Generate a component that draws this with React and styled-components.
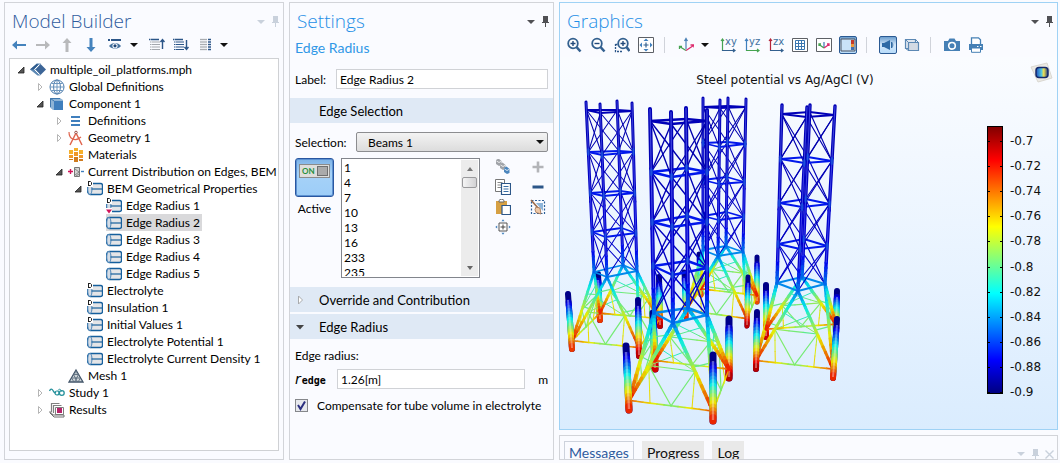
import React, { useState } from 'react';
import styled, { createGlobalStyle, css } from 'styled-components';

const GlobalStyle = createGlobalStyle`
    * {
        box-sizing: border-box;
    }
    body {
        margin: 0;
        background: #fafbff;
        color: #000;
        font-family: Lato, "Open Sans", sans-serif;
        font-size: 12px;
    }
    button, input, select {
        font: inherit;
        color: inherit;
    }
    svg {
        flex: none;
    }
`;

const Workspace = styled.main`
    display: grid;
    grid-template-columns: minmax(0, 280fr) minmax(0, 265fr) minmax(0, 499fr);
    gap: 5px;
    min-height: 100vh;
    padding: 2px 2px 3px 4px;
`;
const Panel = styled.section`
    display: flex;
    flex-direction: column;
    min-width: 0;
    border: 1px solid ${({ $active }) => ($active ? '#9fd2f5' : '#d2d4d9')};
`;
const RightColumn = styled.div`
    display: flex;
    flex-direction: column;
    gap: 5px;
    min-width: 0;
    > :first-child {
        flex: 1;
    }
`;
const Header = styled.header`
    display: flex;
    align-items: center;
    justify-content: space-between;
    height: 30px;
    padding: 7px 1px 0 7px;
`;
const Title = styled.h2`
    margin: 0;
    font-family: "Open Sans", sans-serif;
    font-size: 19px;
    font-weight: 300;
    line-height: 23px;
    color: ${({ $dark }) => ($dark ? '#2f5b9e' : '#1f8fe6')};
`;
const WindowButtons = styled.div`
    display: flex;
    align-items: center;
    color: ${({ $dim }) => ($dim ? '#c9d1dc' : '#505054')};
`;
const WindowButton = styled.button`
    display: flex;
    align-items: center;
    justify-content: center;
    width: 14px;
    height: 14px;
    padding: 0;
    border: 0;
    background: none;
`;

const Toolbar = styled.div`
    display: flex;
    align-items: center;
    height: 24px;
    padding-left: 2px;
`;
const ToolButton = styled.button`
    display: flex;
    align-items: center;
    justify-content: center;
    width: 24px;
    height: 24px;
    padding: 0;
    border: 0;
    background: none;
`;
const CaretButton = styled(ToolButton)`
    width: 14px;
    margin-right: 4px;
`;
const Pressed = styled.span`
    display: flex;
    align-items: center;
    justify-content: center;
    width: 18px;
    height: 18px;
    border: 1px solid #2b5a93;
    border-radius: 2px;
    background: linear-gradient(#6d9fcf, #d3e7fa 50%, #b8dcfa);
`;
const Separator = styled.span`
    width: 1px;
    height: 16px;
    margin: 0 9px 0 6px;
    background: #d0d3da;
`;

const Tree = styled.ul`
    flex: 1;
    margin: 1px 4px 8px;
    padding: 2px 0 0;
    border: 1px solid #cfd1d4;
    background: #fff;
    list-style: none;
    overflow: hidden;
`;
const TreeRow = styled.li`
    display: flex;
    align-items: center;
    height: 17px;
    padding-left: ${({ $level }) => $level * 19 + 5}px;
    white-space: nowrap;
`;
const Twisty = styled.button`
    display: flex;
    flex: none;
    align-items: center;
    justify-content: center;
    width: 12px;
    height: 16px;
    margin-right: 3px;
    padding: 0;
    border: 0;
    background: none;
`;
const TreeLabel = styled.span`
    display: flex;
    align-items: center;
    gap: 4px;
    height: 17px;
    padding-right: 2px;
    line-height: 17px;
    ${({ $selected }) => $selected && css`
        background: #d9d9db;
    `}
`;

const Subtitle = styled.h3`
    margin: 0;
    padding: 5px 0 0 5px;
    font-size: 14px;
    font-weight: 400;
    line-height: 20px;
    color: #2f97e6;
`;
const Field = styled.div`
    display: flex;
    align-items: center;
    height: 20px;
    margin: ${({ $top }) => $top}px 5px 0;
`;
const FieldLabel = styled.label`
    flex: none;
    width: ${({ $width }) => $width}px;
    white-space: nowrap;
`;
const TextInput = styled.input`
    flex: 1;
    min-width: 0;
    height: 20px;
    padding: 0 3px;
    border: 1px solid #d0d2d6;
    background: #fff;
    outline: none;
`;
const SelectBox = styled.div`
    display: grid;
    flex: 1;
    align-items: center;
    height: 20px;
    border: 1px solid #8c8d90;
    border-radius: 2px;
    background: linear-gradient(#f3f3f3, #dcdcdc);
    > * {
        grid-area: 1 / 1;
    }
    > svg {
        justify-self: end;
        margin-right: 3px;
        pointer-events: none;
    }
`;
const Select = styled.select`
    width: 100%;
    height: 18px;
    padding: 0 11px;
    border: 0;
    background: none;
    appearance: none;
    outline: none;
`;
const SectionHeader = styled.button`
    display: flex;
    align-items: center;
    width: 100%;
    height: 25px;
    margin-top: ${({ $top }) => $top}px;
    padding: 0 4px;
    border: 0;
    background: #dfe9f5;
    font-size: 13px;
`;
const SectionArrow = styled.span`
    display: flex;
    justify-content: center;
    width: 11px;
    margin-right: 14px;
`;
const SelectionArea = styled.div`
    display: flex;
    margin: 6px 5px 0;
`;
const ActiveColumn = styled.div`
    display: flex;
    flex-direction: column;
    align-items: center;
    width: 39px;
    gap: 4px;
    margin-right: 7px;
`;
const ActiveButton = styled.button`
    width: 39px;
    height: 39px;
    padding: 5px 3px;
    display: flex;
    align-items: flex-start;
    border: 1px solid #2956a0;
    border-radius: 3px;
    background: linear-gradient(#7db2e6, #a6d2f8 40%, #9dcdf8);
    box-shadow: inset 0 0 0 1px #5d92d2;
`;
const Switch = styled.span`
    display: flex;
    align-items: center;
    justify-content: space-between;
    width: 31px;
    height: 14px;
    padding: 0 1px 0 2px;
    border: 1px solid #8b8b8b;
    background: #dededc;
    color: #23903c;
    font-size: 8px;
    font-weight: 700;
`;
const Knob = styled.span`
    width: 11px;
    height: 10px;
    border: 1px solid #6f6f6f;
    background: #aaa;
`;
const ListFrame = styled.div`
    display: flex;
    flex: 1;
    height: 120px;
    padding: 1px;
    border: 1px solid #82858c;
    background: #fff;
`;
const EdgeList = styled.ul`
    flex: 1;
    margin: 0;
    padding: 0 1px;
    overflow: hidden;
    list-style: none;
    li {
        height: 15px;
        line-height: 15px;
    }
`;
const Scrollbar = styled.div`
    display: flex;
    flex-direction: column;
    width: 17px;
    background: #ececec;
`;
const ScrollButton = styled.button`
    display: flex;
    align-items: center;
    justify-content: center;
    width: 17px;
    height: 17px;
    padding: 0;
    border: 0;
    background: none;
`;
const Track = styled.div`
    flex: 1;
    padding: 0 1px;
`;
const Thumb = styled.div`
    height: 11px;
    border: 1px solid #9a9a9c;
    border-radius: 2px;
    background: linear-gradient(90deg, #f5f5f5, #d2d2d4);
`;
const SelectionTools = styled.div`
    display: grid;
    grid-template-columns: 35px 20px;
    grid-auto-rows: 20px;
    align-content: start;
    margin-left: 13px;
    button {
        width: 20px;
        height: 18px;
    }
`;
const GroupLabel = styled.p`
    margin: 8px 5px 0;
    line-height: 17px;
`;
const Variable = styled.i`
    font-family: "DejaVu Sans", sans-serif;
    font-size: 14px;
`;
const VariableSub = styled.span`
    margin-left: 1px;
    font-family: "DejaVu Sans Mono", monospace;
    font-size: 10px;
    font-weight: 700;
`;
const Unit = styled.span`
    width: 23px;
    text-align: right;
`;
const CheckLabel = styled.label`
    display: flex;
    align-items: center;
    gap: 9px;
    margin: 8px 5px 0;
    line-height: 17px;
    white-space: nowrap;
`;
const CheckFrame = styled.span`
    display: grid;
    flex: none;
    width: 13px;
    height: 13px;
    border: 1px solid #85878b;
    background: #e6e8ed;
    > * {
        grid-area: 1 / 1;
    }
`;
const Checkbox = styled.input`
    width: 11px;
    height: 11px;
    margin: 0;
    appearance: none;
    & + svg {
        visibility: hidden;
        pointer-events: none;
    }
    &:checked + svg {
        visibility: visible;
    }
`;

const GraphicsBody = styled.div`
    flex: 1;
    min-height: 0;
    background: linear-gradient(#fafcff, #f4f9ff 20%, #daecfe);
    svg {
        display: block;
        width: 100%;
        height: 100%;
    }
    text {
        font-family: "DejaVu Sans", sans-serif;
        font-size: 12px;
        fill: #111;
    }
`;

const MessagePanel = styled(Panel)`
    flex-direction: row;
    align-items: flex-start;
    justify-content: space-between;
    height: 25px;
    padding: 5px 1px 0 4px;
    overflow: hidden;
`;
const Tabs = styled.div`
    display: flex;
    gap: 8px;
`;
const Tab = styled.button`
    height: 24px;
    padding: 0 4px;
    border: 1px solid ${({ $current }) => ($current ? '#cdd2dc' : '#e9e9e9')};
    background: ${({ $current }) => ($current ? '#fafbff' : '#e9e9e9')};
    color: ${({ $current }) => ($current ? '#2f5b9e' : '#111')};
    font-size: 14px;
    line-height: 22px;
`;
const MessageButtons = styled(WindowButtons)`
    padding-top: 6px;
`;

/* ---------- icons ---------- */

const Icon = ({ size = 16, children }) => (
    <svg width={size} height={size} viewBox={`0 0 ${size} ${size}`} fill="none" aria-hidden="true">{children}</svg>
);

const Caret = ({ color = 'currentColor', w = 8 }) => (
    <svg width={w} height="4" viewBox="0 0 8 4" aria-hidden="true"><path d="M0 0h8L4 4z" fill={color} /></svg>
);
const Pin = () => (
    <svg width="8" height="11" viewBox="0 0 8 11" aria-hidden="true">
        <path d="M2 0h5v6h1v1H5v4H4V7H1V6h1z" fill="currentColor" />
    </svg>
);
const Close = () => (
    <svg width="9" height="9" viewBox="0 0 9 9" aria-hidden="true">
        <path d="M.5.5l8 8M8.5.5l-8 8" stroke="currentColor" strokeWidth="1.4" />
    </svg>
);

const ArrowH = ({ color, flip }) => (
    <Icon>
        <path d="M1 8l5-4.500V7h9v2H6v3.500z" fill={color} transform={flip ? 'rotate(180 8 8)' : undefined} />
    </Icon>
);
const ArrowV = ({ color, flip }) => (
    <Icon>
        <path d="M8 1l4.500 5H9.500v9H6.500V6H3.500z" fill={color} transform={flip ? 'rotate(180 8 8)' : undefined} />
    </Icon>
);
const Eye = () => (
    <Icon>
        <path d="M1 3h2M4 3h10" stroke="#2c5688" strokeWidth="2" />
        <path d="M2 9c3-4 9-4 12 0c-3 3.600-9 3.600-12 0z" fill="#44729f" />
        <circle cx="8" cy="8.800" r="2.600" fill="#fafbff" />
        <circle cx="8" cy="8.800" r="1.600" fill="#1f4778" />
    </Icon>
);
const ListRows = ({ color }) => (
    <>
        {[5, 7.5, 10, 12.5].map((y) => (
            <path key={y} d={`M1 ${y}h1.500M3 ${y}h8`} stroke={color} strokeWidth="1.200" />
        ))}
    </>
);
const Collapse = () => (
    <Icon>
        <path d="M0 2.500h1.500M2 2.500h8" stroke="#2c5688" strokeWidth="1.500" />
        <ListRows color="#a3a7ad" />
        <path d="M13.500 12V3M11.500 5l2-2.500 2 2.500" stroke="#2c5688" strokeWidth="1.400" />
    </Icon>
);
const Expand = () => (
    <Icon>
        <path d="M0 2.500h1.500M2 2.500h8" stroke="#2c5688" strokeWidth="1.500" />
        <ListRows color="#2c5688" />
        <path d="M13.500 3v9M11.500 10l2 2.500 2-2.500" stroke="#2c5688" strokeWidth="1.400" />
    </Icon>
);
const Columns = () => (
    <Icon>
        {[2.5, 5, 7.5, 10, 12.5].map((y) => (
            <React.Fragment key={y}>
                <path d={`M3 ${y}h7`} stroke="#a9acb0" strokeWidth="1.300" />
                <path d={`M11 ${y}h3`} stroke="#2c5688" strokeWidth="1.500" />
            </React.Fragment>
        ))}
    </Icon>
);

const Open = () => <Icon size={8}><path d="M7 1v6H1z" fill="#555" stroke="#222" strokeWidth=".8" /></Icon>;
const Closed = () => <Icon size={8}><path d="M2.500.500v7l3.500-3.500z" fill="#fff" stroke="#b5b5b5" /></Icon>;

const RootIcon = () => (
    <Icon>
        <path d="M0 7.500L7 1.500h4L5.500 7.500l5 6H7.500z" fill="#5f8ab5" />
        <path d="M0 7.500L7 1.500l1 1.500-4.500 4.500z" fill="#2f5b8d" />
        <path d="M10.500 2L16 7.500 10.500 13 5.500 7.500z" fill="#3c6597" />
        <path d="M9.500 2.500L4.500 7.500l5 5" stroke="#fff" />
    </Icon>
);
const Globe = () => (
    <Icon>
        <circle cx="8" cy="8" r="7" fill="#fff" stroke="#4b7bab" />
        <ellipse cx="8" cy="8" rx="3.400" ry="7" stroke="#4b7bab" />
        <path d="M8 1v14M1 8h14M2.500 4.500h11M2.500 11.500h11" stroke="#6d97bf" />
    </Icon>
);
const Cube = () => (
    <Icon>
        <path d="M1 2h10l3 2v1H5v9H4L1 11.500z" fill="#8db4d6" />
        <path d="M1.500 2.500h9.500M1.500 2.500V11" stroke="#3f78ae" />
        <path d="M5 5h9v9H5z" fill="#3f7fbd" />
        <path d="M1.500 2.500L5 5" stroke="#3f78ae" />
    </Icon>
);
const Bars = () => <Icon><path d="M3 4h9M3 8h9M3 12h9" stroke="#3f7fbd" strokeWidth="2" /></Icon>;
const Compass = () => (
    <Icon>
        <circle cx="8" cy="2.500" r="1.300" stroke="#9a5148" />
        <path d="M7.500 4L2 15M8.500 4L14 15" stroke="#e0664f" strokeWidth="1.500" />
        <path d="M1 2c0 7 6 10 12 5" stroke="#e0664f" strokeWidth="1.200" />
    </Icon>
);
const Materials = () => (
    <Icon>
        <path d="M6 1h4v3H6zM1 3h4v4H1zM11 3h4v4h-4z" fill="#f5b02c" />
        <path d="M6 5h4v4H6zM1 8h4v3H1zM11 8h4v3h-4z" fill="#f0982a" />
        <path d="M6 10h4v5H6zM11 12h4v2h-4zM1 12h4v1H1z" fill="#cf7b1f" />
    </Icon>
);
const Physics = () => (
    <Icon>
        <path d="M0 7.500h5M2.500 5v5" stroke="#d3145a" strokeWidth="1.400" />
        <path d="M6.500 3.500h5v9h-5z" fill="#d4d4d4" stroke="#777" />
        <path d="M7 5l4 3-4 3M11 10l-3 2" stroke="#888" />
        <path d="M13 7.500h3" stroke="#3f7fbd" strokeWidth="1.400" />
    </Icon>
);
const Cylinder = ({ def, red }) => (
    <Icon>
        <path d="M3 2.500h10.500a2 2 0 0 1 2 2v7a2 2 0 0 1-2 2H3c-3.500 0-3.500-11 0-11z" fill="#e4e5e7" stroke="#16609d" strokeWidth="1.400" />
        <path d="M3 2.500c2.600 0 2.600 11 0 11c-3 0-3-11 0-11z" fill="#d5dde6" stroke="#4e86b8" />
        <path d="M4.500 8h11" stroke="#16609d" strokeWidth="1.200" />
        {def && (
            <>
                <path d="M0 0h6v6H0z" fill="#fff" />
                <path d="M1.500 1v4M1 .5h2.500l1 1v2l-1 1H1" stroke="#222" />
            </>
        )}
        {red && (
            <>
                <path d="M0 10h6v6H0z" fill="#fff" />
                <path d="M0 11.500h6L3 15.500z" fill="#d3145a" />
            </>
        )}
    </Icon>
);
const Mesh = () => (
    <Icon>
        <path d="M8 2l7 12H1z" fill="#cfd6da" stroke="#43566a" strokeWidth="1.300" />
        <path d="M5.500 6.500h5M3.500 10h9M8 2.500v3M5.500 6.500L9.500 14M10.500 6.500L6.500 14M3.500 10L6 14M12.500 10L10 14" stroke="#5a6b7c" strokeWidth=".9" />
    </Icon>
);
const Study = () => (
    <Icon>
        <path d="M.5 6C1.500 3.500 3 3.500 4 5.500S5.500 8 7 7" stroke="#25909b" strokeWidth="1.300" />
        <circle cx="8" cy="8" r="2" stroke="#25909b" strokeWidth="1.200" />
        <circle cx="12.800" cy="8" r="2.400" stroke="#25909b" strokeWidth="1.300" />
        <path d="M9 5.500c1-2 3-1.500 3.500 1" stroke="#25909b" />
    </Icon>
);
const Results = () => (
    <Icon>
        <path d="M2.500 10V1.500h8" stroke="#808080" strokeWidth="1.200" />
        <path d="M4.500 11V3.500h8" stroke="#808080" strokeWidth="1.200" />
        <path d="M6.500 5.500h8v7h-8z" fill="#fff" stroke="#808080" />
        <path d="M8 6h5v5H8z" fill="#b5246a" />
        <path d="M1 9.500l3 3.500h11v2H5L1 11z" fill="#fff" stroke="#707070" />
    </Icon>
);

const ZoomGlyph = ({ minus, box }) => (
    <Icon>
        {box && <path d="M1.500 7v7.500h7M1.500 7.500H4" stroke="#2c5688" strokeWidth="1.300" strokeDasharray="2 1" />}
        <circle cx={box ? 9 : 7} cy="6.500" r="4.800" fill="#fff" stroke="#33608f" strokeWidth="1.800" />
        <path d={box ? 'M12.500 10l3 4' : 'M10.500 10l4 4.500'} stroke="#33608f" strokeWidth="2.600" />
        <path d={box ? 'M6.500 6.500h5M9 4v5' : minus ? 'M4.500 6.500h5' : 'M4.500 6.500h5M7 4v5'} stroke="#22497a" strokeWidth="1.400" />
    </Icon>
);
const Extents = () => (
    <Icon>
        <path d="M.5.500h15v15H.500z" fill="#fff" stroke="#5d6066" />
        <path d="M5.500 8h5M8 5.500v5" stroke="#33608f" strokeWidth="1.200" />
        <path d="M5.500 4L8 1.500 10.500 4zM5.500 12L8 14.500 10.500 12zM4 5.500L1.500 8 4 10.500zM12 5.500L14.500 8 12 10.500z" fill="#3f7fbd" />
    </Icon>
);
const AxesGlyph = () => (
    <Icon>
        <path d="M8 12V2M6.500 4L8 1.500 9.500 4" stroke="#4b82b6" strokeWidth="1.200" />
        <path d="M8 13.500L1.500 9.500M1.500 12V9.500H4" stroke="#46a350" strokeWidth="1.300" />
        <path d="M8 13.500l7.500-5M12.500 8h3.500v2.500" stroke="#dd2b6d" strokeWidth="1.300" />
    </Icon>
);
const Plane = ({ name, v, h }) => (
    <svg width="20" height="16" viewBox="0 0 20 16" fill="none" aria-hidden="true">
        <path d="M4.500 14V2M3 4l1.500-2L6 4" stroke={v} strokeWidth="1.200" />
        <path d="M4 13.500h13M15 12l2 1.500-2 1.500" stroke={h} strokeWidth="1.200" />
        <text x="7" y="8" fontSize="10" fontFamily="DejaVu Sans" fill="#40709e">{name}</text>
    </svg>
);
const GridGlyph = () => (
    <Icon>
        <path d="M.5 1.500h15v13H.5z" fill="#fff" stroke="#5d6066" />
        <path d="M3.500 3.500h9v9h-9zM6.500 3.500v9M9.500 3.500v9M3.500 6.500h9M3.500 9.500h9" stroke="#3a76b0" />
    </Icon>
);
const AxisBox = () => (
    <Icon>
        <path d="M.5 1.500h15v13H.5z" fill="#fff" stroke="#5d6066" />
        <path d="M8 11V5" stroke="#4b82b6" strokeWidth="1.300" />
        <path d="M8 11L3 7.500M3 9V7h2" stroke="#46a350" strokeWidth="1.300" />
        <path d="M8 11l5-3.500M11 7h2v2" stroke="#dd2b6d" strokeWidth="1.300" />
    </Icon>
);
const LegendGlyph = () => (
    <Icon>
        <path d="M1 2h14v12H1z" fill="#c9e2f8" stroke="#4a5260" />
        <path d="M11 3h3v4h-3z" fill="#c33a2c" />
        <path d="M11 7h3v3h-3z" fill="#ef9a3c" />
        <path d="M11 10h3v3h-3z" fill="#3f6fb0" />
    </Icon>
);
const Lamp = () => (
    <Icon>
        <path d="M2 6h2l6-3v10L4 10H2z" fill="#2f6aa5" />
        <path d="M11.500 5a4 4 0 0 1 0 6z" fill="#fff" stroke="#2f6aa5" />
    </Icon>
);
const BoxGlyph = () => (
    <Icon>
        <path d="M1.500 2.500h10v9h-10z" fill="#dfe6ef" stroke="#5c88b4" strokeWidth="1.200" />
        <path d="M4.500 5.500h10v8h-10z" fill="#d3dae4" stroke="#5c88b4" strokeWidth="1.200" />
        <path d="M1.500 2.500l3 3M11.500 2.500l3 3M1.500 11.500l3 2" stroke="#5c88b4" />
    </Icon>
);
const Camera = () => (
    <Icon>
        <path d="M0 4h4l1.500-2.500h5L12 4h4v10H0z" fill="#4680b5" />
        <circle cx="8" cy="8.800" r="3.300" fill="#4680b5" stroke="#fff" strokeWidth="1.600" />
    </Icon>
);
const Printer = () => (
    <Icon>
        <path d="M3.500 7V.8h7l2 2V7" fill="#fff" stroke="#4680b5" strokeWidth="1.300" />
        <path d="M1 7h14v6H1z" fill="#4680b5" />
        <path d="M3.500 11h9v4.300h-9z" fill="#fff" stroke="#4680b5" />
        <path d="M9 9.500h1.500M12 9.500h1.500" stroke="#fff" />
    </Icon>
);

const CreateSelection = () => (
    <Icon>
        {[[1, 1, '#a0a3a8'], [5, 5, '#a0a3a8'], [9, 9, '#4a85bd']].map(([x, y, c]) => (
            <g key={x}>
                <path d={`M${x} ${y}l2.500-1.500L${x + 5.5} ${y + 1}v4L${x + 3} ${y + 6}l-3-2z`} fill={c} />
                <path d={`M${x + 0.5} ${y + 1}l2.500 1.500 2.200-1.200`} stroke="#fff" strokeWidth=".8" />
            </g>
        ))}
    </Icon>
);
const Copy = () => (
    <Icon>
        <path d="M.5.500h9v12h-9z" fill="#fff" stroke="#777" />
        <path d="M2.500 3.500h5M2.500 6h5M2.500 8.500h5" stroke="#888" />
        <path d="M6.500 4.500h9v11h-9z" fill="#fff" stroke="#2c5688" strokeWidth="1.200" />
        <path d="M8.500 7.500h5M8.500 10h5M8.500 12.500h5" stroke="#3a6ea5" />
    </Icon>
);
const Paste = () => (
    <Icon>
        <path d="M1 2h11v13H1z" fill="#d6a043" />
        <path d="M4 3V1.500C5-.2 8-.2 9 1.500V3z" fill="#fff" stroke="#666" />
        <path d="M7 6.500h8.500v9H7z" fill="#fff" stroke="#2c5688" strokeWidth="1.200" />
    </Icon>
);
const ZoomSelection = () => (
    <Icon>
        <path d="M4 4h8v8H4z" fill="#fff" stroke="#555" />
        <path d="M5.500 8h5M8 5.500v5" stroke="#444" />
        <path d="M6.500 2.200L8 .3l1.500 1.900zM6.500 13.800L8 15.700l1.500-1.900zM2.200 6.500L.3 8l1.900 1.500zM13.800 6.500L15.700 8l-1.900 1.500z" fill="#3f7fbd" />
    </Icon>
);
const Plus = () => <Icon><path d="M2.500 8h11M8 2.500v11" stroke="#b3b4b8" strokeWidth="2.600" /></Icon>;
const Minus = () => <Icon><path d="M2.500 8h11" stroke="#2c5688" strokeWidth="3" /></Icon>;
const Broom = () => (
    <Icon>
        <path d="M1.500 1.500h13v13h-13z" stroke="#2c6099" strokeWidth="1.200" strokeDasharray="2 1.500" />
        <path d="M6 4h7v8z" fill="#8fb6da" />
        <path d="M1 1l7 8" stroke="#9b6b4b" strokeWidth="1.600" />
        <path d="M6 8l4 1 1 6-5-1.500-1-3z" fill="#efc9a8" stroke="#9b6b4b" strokeWidth=".8" />
    </Icon>
);

/* ---------- plot ---------- */

const JET = [
    [0, [0, 0, 128]],
    [0.125, [0, 0, 255]],
    [0.375, [0, 255, 255]],
    [0.625, [255, 255, 0]],
    [0.875, [255, 0, 0]],
    [1, [128, 0, 0]],
];

function jet(t) {
    const v = Math.min(1, Math.max(0, t));
    const i = Math.max(1, JET.findIndex(([s]) => s >= v));
    const [t0, c0] = JET[i - 1];
    const [t1, c1] = JET[i];
    const k = (v - t0) / (t1 - t0);
    return `rgb(${c0.map((c, n) => Math.round((c + (c1[n] - c) * k) * 0.92)).join(',')})`;
}

const lerp = (p, q, k) => [p[0] + (q[0] - p[0]) * k, p[1] + (q[1] - p[1]) * k];

// A beam whose colour runs from potential a to potential b
const Beam = ({ p, q, a, b = a, w = 1, steps = 1 }) => (
    <>
        {Array.from({ length: steps }, (_, i) => {
            const s = lerp(p, q, i / steps);
            const e = lerp(p, q, (i + 1) / steps);
            return (
                <path
                    key={i}
                    d={`M${s[0].toFixed(1)} ${s[1].toFixed(1)}L${e[0].toFixed(1)} ${e[1].toFixed(1)}`}
                    stroke={jet(a + (b - a) * ((i + 0.5) / steps))}
                    strokeWidth={w}
                    strokeLinecap="round"
                />
            );
        })}
    </>
);

// Corners go round the tower: left, front, right, back.
// Piles go round the base: front left, front right, back right, back left.
const platforms = [
    {
        id: 'north', w: 3, pile: 5,
        top: [[703, 98], [720, 100], [746, 99], [728, 98]],
        bottomX: [703, 718, 743, 726],
        rings: [[107, 108, 107, 106], [143, 147, 144, 142], [180, 184, 182, 177], [216, 220, 217, 212], [250, 256, 252, 246]],
        piles: [[684, 272, 686, 317], [748, 277, 747, 326], [757, 257, 757, 302], [699, 254, 701, 295]],
        heat: [0.85, 0.95, 0.82, 0.8],
    },
    {
        id: 'west', w: 3, pile: 6,
        top: [[586, 102], [600, 104], [632, 103], [617, 101]],
        bottomX: [594, 607, 637, 623],
        rings: [[110, 113, 111, 110], [152, 155, 152, 151], [193, 196, 193, 191], [232, 237, 233, 228], [272, 277, 271, 265]],
        piles: [[568, 294, 572, 349], [638, 300, 639, 356], [659, 277, 660, 326], [598, 274, 600, 320]],
        heat: [0.84, 0.95, 0.95, 0.84],
    },
    {
        id: 'east', w: 3.4, pile: 6,
        top: [[782, 105], [807, 107], [835, 106], [810, 105]],
        bottomX: [777, 798, 825, 802],
        rings: [[114, 117, 115, 112], [159, 163, 161, 157], [203, 207, 204, 199], [244, 249, 246, 239], [283, 291, 284, 277]],
        piles: [[757, 312, 756, 369], [837, 319, 833, 378], [837, 291, 836, 330], [766, 285, 766, 337]],
        heat: [0.96, 0.86, 0.84, 0.93],
    },
    {
        id: 'south', w: 4, pile: 7,
        top: [[650, 109], [671, 112], [707, 110], [686, 108]],
        bottomX: [654, 673, 707, 688],
        rings: [[121, 124, 121, 119], [172, 177, 172, 168], [222, 227, 222, 216], [266, 275, 268, 261], [313, 323, 315, 308]],
        piles: [[626, 346, 629, 410], [713, 355, 713, 421], [729, 319, 729, 378], [653, 313, 655, 369]],
        heat: [0.86, 0.86, 0.96, 0.93],
    },
];

function Platform({ top, bottomX, rings, piles, w, pile, heat }) {
    const last = rings.length - 1;
    const node = (level, c) => {
        const y = rings[level][c];
        const k = (y - top[c][1]) / (rings[last][c] - top[c][1]);
        return [top[c][0] + (bottomX[c] - top[c][0]) * k, y];
    };
    const feet = piles.map(([, y0, x, y]) => [x, y - (y - y0) * 0.15]);
    // each corner stands over the side between two neighbouring piles
    const legs = [[0, 0, 3], [1, 0, 1], [2, 1, 2], [3, 2, 3]];

    const Pile = ({ i }) => {
        const [x0, y0, x1, y1] = piles[i];
        return (
            <>
                <Beam p={[x0, y0]} q={[x1, y1]} a={0.02} b={0.02} w={pile} />
                <Beam p={lerp([x0, y0], [x1, y1], 0.15)} q={[x1, y1]} a={0.06} b={heat[i]} w={pile} steps={16} />
                <path d={`M${x0} ${y0 + 6}L${x1} ${y1 - 1}`} stroke="#fff" strokeOpacity=".35" strokeWidth={pile / 3} />
            </>
        );
    };

    return (
        <g>
            <Pile i={3} />
            <Pile i={2} />
            {legs.map(([c, a, b]) => {
                const n = node(last, c);
                const base = lerp(feet[a], feet[b], 0.5);
                const ma = lerp(n, feet[a], 0.55);
                const mb = lerp(n, feet[b], 0.55);
                const ua = lerp(n, feet[a], 0.32);
                const ub = lerp(n, feet[b], 0.32);
                return (
                    <g key={c}>
                        <Beam p={feet[a]} q={base} a={0.78} b={0.5} steps={6} w={1.6} />
                        <Beam p={feet[b]} q={base} a={0.8} b={0.5} steps={6} w={1.6} />
                        <Beam p={base} q={ma} a={0.48} b={0.54} w={1.2} />
                        <Beam p={base} q={mb} a={0.46} b={0.54} w={1.2} />
                        <Beam p={ma} q={mb} a={0.54} b={0.46} steps={3} w={1.2} />
                        <Beam p={ua} q={mb} a={0.4} b={0.54} steps={3} w={1} />
                        <Beam p={ub} q={ma} a={0.4} b={0.54} steps={3} w={1} />
                        <Beam p={ma} q={lerp(feet[a], base, 0.5)} a={0.56} b={0.66} steps={3} w={1} />
                        <Beam p={mb} q={lerp(feet[b], base, 0.5)} a={0.56} b={0.66} steps={3} w={1} />
                    </g>
                );
            })}
            {legs.map(([c, a, b]) => {
                const [d, da, db] = legs[(c + 1) % 4];
                const shared = a === da || a === db ? a : b;
                return (
                    <Beam
                        key={c}
                        p={lerp(node(last, c), feet[shared], 0.5)}
                        q={lerp(node(last, d), feet[shared], 0.5)}
                        a={0.48}
                        w={1.2}
                    />
                );
            })}
            {[3, 2, 0, 1].map((c) => {
                const [, a, b] = legs[c];
                const n = node(last, c);
                return (
                    <g key={c}>
                        <Beam p={n} q={feet[a]} a={0.24} b={0.86} steps={14} w={w * 0.9} />
                        <Beam p={n} q={feet[b]} a={0.24} b={0.86} steps={14} w={w * 0.9} />
                    </g>
                );
            })}
            {[[2, 3], [3, 0], [0, 1], [1, 2]].map(([c, d]) => (
                <g key={c}>
                    {rings.map((_, i) => (
                        <g key={i}>
                            {i < last && (
                                <>
                                    <Beam p={node(i, c)} q={node(i + 1, d)} a={0.06 + i * 0.01} w={w * 0.34} />
                                    <Beam p={node(i, d)} q={node(i + 1, c)} a={0.06 + i * 0.01} w={w * 0.34} />
                                </>
                            )}
                            <Beam p={node(i, c)} q={node(i, d)} a={i === last ? 0.27 : i === 0 ? 0.07 : 0.15} w={w * 0.6} />
                        </g>
                    ))}
                </g>
            ))}
            {[3, 0, 2, 1].map((c) => {
                const n = node(last, c);
                const k = lerp(top[c], n, 0.88);
                return (
                    <g key={c}>
                        <Beam p={top[c]} q={k} a={0.06} b={0.1} w={w} steps={3} />
                        <Beam p={k} q={n} a={0.12} b={0.25} w={w} steps={4} />
                        <path d={`M${top[c][0]} ${top[c][1]}L${k[0]} ${k[1]}`} stroke="#6b76ff" strokeOpacity=".6" strokeWidth={w / 3.5} />
                        {rings.slice(1, last).map((_, i) => {
                            const [x, y] = node(i + 1, c);
                            return <ellipse key={i} cx={x} cy={y} rx={w * 0.45} ry="4" fill="#1560e0" fillOpacity=".6" />;
                        })}
                    </g>
                );
            })}
            <Pile i={0} />
            <Pile i={1} />
        </g>
    );
}

const ticks = ['-0.7', '-0.72', '-0.74', '-0.76', '-0.78', '-0.8', '-0.82', '-0.84', '-0.86', '-0.88', '-0.9'];

const Plot = () => (
    <svg viewBox="560 57 497 372" fill="none" role="img" aria-label="Steel potential vs Ag/AgCl (V)">
        <defs>
            <linearGradient id="jet" x1="0" y1="0" x2="0" y2="1">
                <stop offset="0" stopColor="#800000" />
                <stop offset=".125" stopColor="#f00" />
                <stop offset=".375" stopColor="#ff0" />
                <stop offset=".625" stopColor="#0ff" />
                <stop offset=".875" stopColor="#00f" />
                <stop offset="1" stopColor="#000080" />
            </linearGradient>
            <linearGradient id="badge" x1="0" y1="0" x2="1" y2="0">
                <stop offset="0" stopColor="#1e4fc0" />
                <stop offset=".45" stopColor="#52c4e0" />
                <stop offset=".65" stopColor="#f5e04a" />
                <stop offset="1" stopColor="#14368f" />
            </linearGradient>
        </defs>
        <text x="785" y="84" textAnchor="middle">Steel potential vs Ag/AgCl (V)</text>
        {platforms.map((p) => <Platform key={p.id} {...p} />)}
        <rect x="987.5" y="126.500" width="15" height="267" fill="url(#jet)" stroke="#000" />
        {ticks.map((label, i) => (
            <g key={label}>
                <path d={`M988 ${Math.round(141 + i * 25.1)}.5h2M1000 ${Math.round(141 + i * 25.1)}.5h2`} stroke="#000" />
                <text x="1010" y={Math.round(145 + i * 25.1)}>{label}</text>
            </g>
        ))}
        <path d="M1031 67l16-4 5 15-14 4z" fill="#eceae4" stroke="#dad8d2" />
        <rect x="1036" y="67.500" width="12" height="10" rx="3" fill="url(#badge)" stroke="#15296a" strokeWidth="1.500" />
    </svg>
);

/* ---------- panels ---------- */

const nodes = [
    { level: 0, state: 'open', icon: <RootIcon />, text: 'multiple_oil_platforms.mph' },
    { level: 1, state: 'closed', icon: <Globe />, text: 'Global Definitions' },
    { level: 1, state: 'open', icon: <Cube />, text: 'Component 1' },
    { level: 2, state: 'closed', icon: <Bars />, text: 'Definitions' },
    { level: 2, state: 'closed', icon: <Compass />, text: 'Geometry 1' },
    { level: 2, icon: <Materials />, text: 'Materials' },
    { level: 2, state: 'open', icon: <Physics />, text: 'Current Distribution on Edges, BEM' },
    { level: 3, state: 'open', icon: <Cylinder def />, text: 'BEM Geometrical Properties' },
    { level: 4, icon: <Cylinder def red />, text: 'Edge Radius 1' },
    { level: 4, icon: <Cylinder />, text: 'Edge Radius 2' },
    { level: 4, icon: <Cylinder />, text: 'Edge Radius 3' },
    { level: 4, icon: <Cylinder />, text: 'Edge Radius 4' },
    { level: 4, icon: <Cylinder />, text: 'Edge Radius 5' },
    { level: 3, icon: <Cylinder def />, text: 'Electrolyte' },
    { level: 3, icon: <Cylinder def />, text: 'Insulation 1' },
    { level: 3, icon: <Cylinder def />, text: 'Initial Values 1' },
    { level: 3, icon: <Cylinder />, text: 'Electrolyte Potential 1' },
    { level: 3, icon: <Cylinder />, text: 'Electrolyte Current Density 1' },
    { level: 2, icon: <Mesh />, text: 'Mesh 1' },
    { level: 1, state: 'closed', icon: <Study />, text: 'Study 1' },
    { level: 1, state: 'closed', icon: <Results />, text: 'Results' },
];

const PanelHeader = ({ title, dark }) => (
    <Header>
        <Title $dark={dark}>{title}</Title>
        <WindowButtons $dim={dark}>
            <WindowButton aria-label="Panel menu"><Caret /></WindowButton>
            <WindowButton aria-label="Pin"><Pin /></WindowButton>
        </WindowButtons>
    </Header>
);

const ModelBuilder = () => {
    const [selected, setSelected] = useState('Edge Radius 2');

    return (
        <Panel>
            <PanelHeader title="Model Builder" dark />
            <Toolbar>
                <ToolButton aria-label="Previous"><ArrowH color="#4583bd" /></ToolButton>
                <ToolButton aria-label="Next"><ArrowH color="#b8b9bb" flip /></ToolButton>
                <ToolButton aria-label="Move up"><ArrowV color="#b8b9bb" /></ToolButton>
                <ToolButton aria-label="Move down"><ArrowV color="#4583bd" flip /></ToolButton>
                <ToolButton aria-label="Show"><Eye /></ToolButton>
                <CaretButton aria-label="Show options"><Caret color="#111" /></CaretButton>
                <ToolButton aria-label="Collapse all"><Collapse /></ToolButton>
                <ToolButton aria-label="Expand all"><Expand /></ToolButton>
                <ToolButton aria-label="Node text"><Columns /></ToolButton>
                <CaretButton aria-label="Node text options"><Caret color="#111" /></CaretButton>
            </Toolbar>
            <Tree role="tree">
                {nodes.map((n) => (
                    <TreeRow key={n.text} $level={n.level} role="treeitem" onClick={() => setSelected(n.text)}>
                        <Twisty aria-label={`Toggle ${n.text}`}>
                            {n.state === 'open' && <Open />}
                            {n.state === 'closed' && <Closed />}
                        </Twisty>
                        <TreeLabel $selected={n.text === selected}>
                            {n.icon}
                            {n.text}
                        </TreeLabel>
                    </TreeRow>
                ))}
            </Tree>
        </Panel>
    );
};

const Settings = () => (
    <Panel>
        <PanelHeader title="Settings" />
        <Subtitle>Edge Radius</Subtitle>
        <Field $top={11}>
            <FieldLabel $width={41} htmlFor="label">Label:</FieldLabel>
            <TextInput id="label" defaultValue="Edge Radius 2" />
        </Field>
        <SectionHeader $top={9}><SectionArrow />Edge Selection</SectionHeader>
        <Field $top={9}>
            <FieldLabel $width={61} htmlFor="selection">Selection:</FieldLabel>
            <SelectBox>
                <Select id="selection" defaultValue="Beams 1">
                    <option>Beams 1</option>
                </Select>
                <Caret color="#111" />
            </SelectBox>
        </Field>
        <SelectionArea>
            <ActiveColumn>
                <ActiveButton id="active" aria-pressed="true" aria-labelledby="active-label">
                    <Switch>ON<Knob /></Switch>
                </ActiveButton>
                <span id="active-label">Active</span>
            </ActiveColumn>
            <ListFrame>
                <EdgeList role="listbox" aria-label="Edges">
                    {[1, 4, 7, 10, 13, 16, 233, 235].map((n) => <li key={n} role="option">{n}</li>)}
                </EdgeList>
                <Scrollbar>
                    <ScrollButton aria-label="Scroll up">
                        <Icon size={8}><path d="M1 6h6L4 2z" fill="#777" /></Icon>
                    </ScrollButton>
                    <Track><Thumb /></Track>
                    <ScrollButton aria-label="Scroll down">
                        <Icon size={8}><path d="M1 2h6L4 6z" fill="#666" /></Icon>
                    </ScrollButton>
                </Scrollbar>
            </ListFrame>
            <SelectionTools>
                <ToolButton aria-label="Create selection"><CreateSelection /></ToolButton>
                <ToolButton aria-label="Add to selection"><Plus /></ToolButton>
                <ToolButton aria-label="Copy selection"><Copy /></ToolButton>
                <ToolButton aria-label="Remove from selection"><Minus /></ToolButton>
                <ToolButton aria-label="Paste selection"><Paste /></ToolButton>
                <ToolButton aria-label="Clear selection"><Broom /></ToolButton>
                <ToolButton aria-label="Zoom to selection"><ZoomSelection /></ToolButton>
            </SelectionTools>
        </SelectionArea>
        <SectionHeader $top={9}>
            <SectionArrow><Icon size={10}><path d="M3.500 1v8l4-4z" fill="#fff" stroke="#a9abad" /></Icon></SectionArrow>
            Override and Contribution
        </SectionHeader>
        <SectionHeader $top={2}>
            <SectionArrow><Icon size={10}><path d="M1 3h8L5 7.500z" fill="#444" /></Icon></SectionArrow>
            Edge Radius
        </SectionHeader>
        <GroupLabel>Edge radius:</GroupLabel>
        <Field $top={5}>
            <FieldLabel $width={42} htmlFor="radius">
                <Variable>r</Variable><VariableSub>edge</VariableSub>
            </FieldLabel>
            <TextInput id="radius" defaultValue="1.26[m]" />
            <Unit>m</Unit>
        </Field>
        <CheckLabel>
            <CheckFrame>
                <Checkbox type="checkbox" defaultChecked />
                <Icon size={11}><path d="M2 5l2.500 4L9 1.500" stroke="#2b2f80" strokeWidth="2" /></Icon>
            </CheckFrame>
            Compensate for tube volume in electrolyte
        </CheckLabel>
    </Panel>
);

const Graphics = () => (
    <Panel $active>
        <PanelHeader title="Graphics" />
        <Toolbar>
            <ToolButton aria-label="Zoom in"><ZoomGlyph /></ToolButton>
            <ToolButton aria-label="Zoom out"><ZoomGlyph minus /></ToolButton>
            <ToolButton aria-label="Zoom box"><ZoomGlyph box /></ToolButton>
            <ToolButton aria-label="Zoom extents"><Extents /></ToolButton>
            <Separator />
            <ToolButton aria-label="Default view"><AxesGlyph /></ToolButton>
            <CaretButton aria-label="View options"><Caret color="#111" /></CaretButton>
            <ToolButton><Plane name="xy" v="#46a350" h="#33608f" /></ToolButton>
            <ToolButton><Plane name="yz" v="#3f7fbd" h="#46a350" /></ToolButton>
            <ToolButton><Plane name="zx" v="#b5253a" h="#33608f" /></ToolButton>
            <ToolButton aria-label="Show grid"><GridGlyph /></ToolButton>
            <ToolButton aria-label="Show axes"><AxisBox /></ToolButton>
            <ToolButton aria-label="Show legends" aria-pressed="true"><Pressed><LegendGlyph /></Pressed></ToolButton>
            <Separator />
            <ToolButton aria-label="Scene light" aria-pressed="true"><Pressed><Lamp /></Pressed></ToolButton>
            <ToolButton aria-label="Transparency"><BoxGlyph /></ToolButton>
            <Separator />
            <ToolButton aria-label="Snapshot"><Camera /></ToolButton>
            <ToolButton aria-label="Print"><Printer /></ToolButton>
        </Toolbar>
        <GraphicsBody><Plot /></GraphicsBody>
    </Panel>
);

const Messages = () => (
    <MessagePanel>
        <Tabs>
            <Tab $current>Messages</Tab>
            <Tab>Progress</Tab>
            <Tab>Log</Tab>
        </Tabs>
        <MessageButtons $dim>
            <WindowButton aria-label="Panel menu"><Caret /></WindowButton>
            <WindowButton aria-label="Pin"><Pin /></WindowButton>
            <WindowButton aria-label="Close"><Close /></WindowButton>
        </MessageButtons>
    </MessagePanel>
);

const App = () => (
    <>
        <GlobalStyle />
        <Workspace>
            <ModelBuilder />
            <Settings />
            <RightColumn>
                <Graphics />
                <Messages />
            </RightColumn>
        </Workspace>
    </>
);

export default App;
